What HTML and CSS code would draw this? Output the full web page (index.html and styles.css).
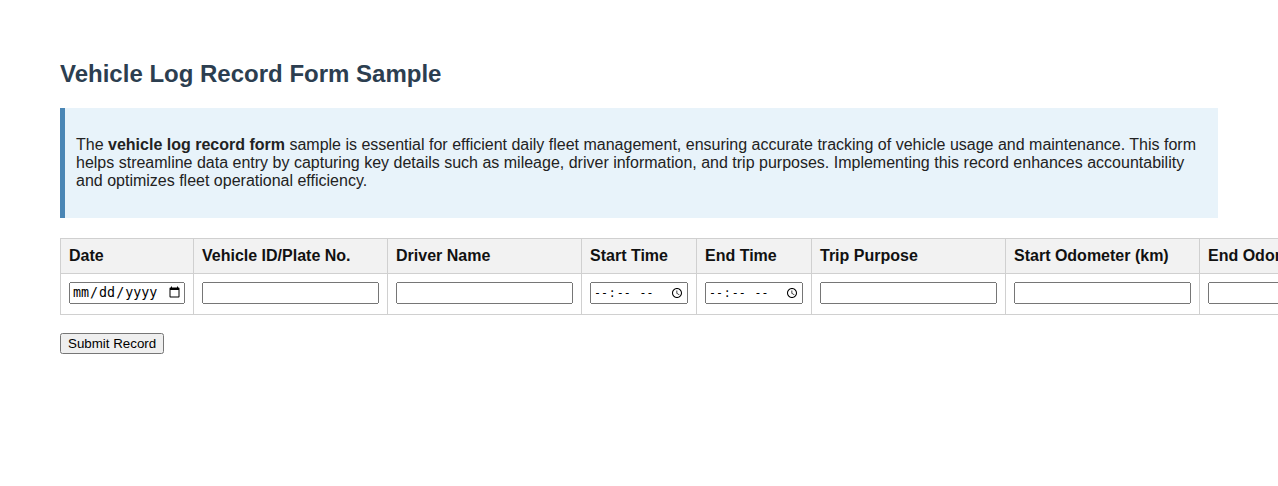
FILE: index.html
```html
<!DOCTYPE html>
<html lang="en">
<head>
<meta charset="utf-8">
<title>Vehicle Log Record Form Sample</title>
<link rel="stylesheet" href="styles.css">
</head>
<body>
<div class="page">
  <h1 class="title">Vehicle Log Record Form Sample</h1>
  <div class="info">
    <p>The <strong>vehicle log record form</strong> sample is essential for efficient daily fleet management, ensuring accurate tracking of vehicle usage and maintenance. This form helps streamline data entry by capturing key details such as mileage, driver information, and trip purposes. Implementing this record enhances accountability and optimizes fleet operational efficiency.</p>
  </div>
  <form class="log-form">
    <table class="log-table">
      <thead>
        <tr>
          <th>Date</th>
          <th>Vehicle ID/Plate No.</th>
          <th>Driver Name</th>
          <th>Start Time</th>
          <th>End Time</th>
          <th>Trip Purpose</th>
          <th>Start Odometer (km)</th>
          <th>End Odometer (km)</th>
          <th>Fuel Used (L)</th>
          <th>Remarks</th>
        </tr>
      </thead>
      <tbody>
        <tr>
          <td><input class="in-date" type="date"></td>
          <td><input class="in-text" type="text"></td>
          <td><input class="in-text" type="text"></td>
          <td><input class="in-time" type="time"></td>
          <td><input class="in-time" type="time"></td>
          <td><input class="in-text" type="text"></td>
          <td><input class="in-text" type="text"></td>
          <td><input class="in-text" type="text"></td>
          <td><input class="in-text" type="text"></td>
          <td><input class="in-text" type="text"></td>
        </tr>
      </tbody>
    </table>
    <div class="actions">
      <button class="submit" type="submit">Submit Record</button>
    </div>
  </form>
</div>
</body>
</html>
```
FILE: styles.css
```css
html {
  overflow: hidden;
}
body {
  margin: 0;
  font-family: "Liberation Sans", Arial, sans-serif;
  color: #000;
  background: #fff;
}
.page {
  padding: 60px 60px 40px;
}
.title {
  margin: 0 0 20px;
  font-size: 24px;
  font-weight: bold;
  color: #2c3e50;
}
.info {
  background: #e8f3fa;
  border-left: 5px solid #4a86b5;
  padding: 12px 11px;
  font-size: 16px;
  line-height: 18px;
  color: #222;
}
.info p {
  margin: 16px 0;
}
.log-form {
  margin-top: 20px;
}
.log-table {
  border-collapse: collapse;
  white-space: nowrap;
}
.log-table th,
.log-table td {
  border: 1px solid #d0d0d0;
  padding: 8px;
  text-align: left;
}
.log-table th {
  background: #f2f2f2;
  font-size: 16px;
  font-weight: bold;
  color: #111;
}
.log-table td {
  padding: 8px 8px 10px;
}
.log-table input {
  display: block;
  box-sizing: border-box;
  height: 22px;
  margin: 0;
}
.in-text {
  width: 177px;
}
.in-date {
  width: 116px;
}
.in-time {
  width: 98px;
  font-size: 11.5px;
}
.actions {
  display: flex;
  margin-top: 18px;
}
.submit {
  height: 21px;
  font-family: "Liberation Sans", Arial, sans-serif;
  font-size: 13.33px;
}
```
